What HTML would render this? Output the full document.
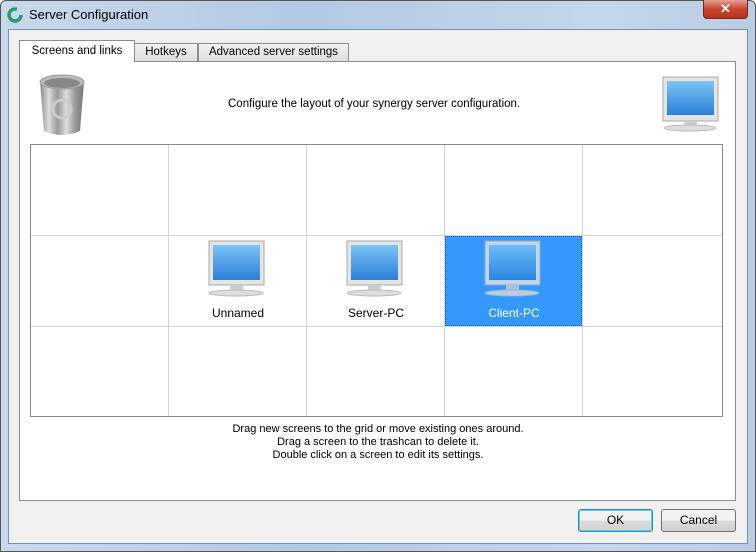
<!DOCTYPE html>
<html><head><meta charset="utf-8"><style>
*{margin:0;padding:0;box-sizing:border-box}
body{width:756px;height:552px;overflow:hidden;font-family:"Liberation Sans","Noto Sans CJK JP",sans-serif;font-size:12px;color:#000;background:#fff}
.win{position:absolute;left:0;top:0;width:756px;height:552px;background:linear-gradient(90deg,#c9d9ec,#b3c9e3 40%,#c4d6ea 80%,#b8cde5);border:1px solid #555;border-radius:6px 6px 0 0}
.title{position:absolute;left:29px;top:7px;font-size:13px;color:#000}
.client{position:absolute;left:8px;top:29px;width:740px;height:515px;background:#f0f0f0;border:1px solid #7a8fa8}
.pane{position:absolute;left:19px;top:61px;width:717px;height:440px;background:#fff;border:1px solid #898c95}
.tab{position:absolute;top:43px;height:19px;border:1px solid #898c95;background:linear-gradient(#f2f2f2,#dcdcdc);font-size:11.5px;text-align:center;line-height:17px}
.cell{position:absolute;border-right:1px solid #d4d4d4;border-bottom:1px solid #d4d4d4}
.btn{position:absolute;top:509px;height:23px;border:1px solid #707070;border-radius:3px;background:linear-gradient(#f2f2f2 50%,#dddddd 50%,#cfcfcf);text-align:center;line-height:21px}
.lbl{position:absolute;font-size:12px;text-align:center;width:138px}
</style></head><body>
<div class="win"></div>
<svg style="position:absolute;left:7px;top:7px" width="16" height="16"><circle cx="8" cy="8" r="6" fill="none" stroke="#2a9a6a" stroke-width="3.5" stroke-dasharray="30 8"/></svg>
<div class="title">Server Configuration</div>
<div style="position:absolute;left:703px;top:0;width:45px;height:19px;border:1px solid #6b2a20;border-top:none;border-radius:0 0 4px 4px;background:linear-gradient(#e8a193,#c7452f 50%,#b8321c);color:#fff;font-weight:bold;text-align:center;line-height:18px;font-size:13px">✕</div>
<div class="client"></div>
<div class="pane"></div>
<div class="tab" style="left:19px;top:40px;height:22px;width:116px;background:#fff;border-bottom:none;line-height:20px">Screens and links</div>
<div class="tab" style="left:134px;width:64px">Hotkeys</div>
<div class="tab" style="left:198px;width:151px">Advanced server settings</div>
<svg style="position:absolute;left:37px;top:73px" width="50" height="64"><defs><linearGradient id="tg" x1="0" x2="1"><stop offset="0" stop-color="#8a8a8a"/><stop offset=".2" stop-color="#ddd"/><stop offset=".4" stop-color="#999"/><stop offset=".6" stop-color="#ddd"/><stop offset=".8" stop-color="#999"/><stop offset="1" stop-color="#777"/></linearGradient></defs><path d="M3 9 L7 58 Q25 66 43 58 L47 9Z" fill="url(#tg)"/><ellipse cx="25" cy="9" rx="22" ry="7" fill="#bbb" stroke="#999"/><ellipse cx="25" cy="10" rx="18" ry="5" fill="#888"/><circle cx="25" cy="36" r="9" fill="none" stroke="#ccc" stroke-width="3"/></svg>
<div style="position:absolute;left:228px;top:98px;font-size:11.5px;width:300px;white-space:nowrap">Configure the layout of your synergy server configuration.</div>
<svg style="position:absolute;left:662px;top:76px" width="58" height="56"><defs><linearGradient id="sg" x1="0" y1="0" x2="0" y2="1"><stop offset="0" stop-color="#7cc4f6"/><stop offset="1" stop-color="#2a7fd8"/></linearGradient></defs><rect x="1" y="1" width="55" height="44" fill="#e4e4e4" stroke="#aaa"/><rect x="5" y="5" width="47" height="34" fill="url(#sg)"/><rect x="22" y="45" width="13" height="5" fill="#ccc"/><ellipse cx="28" cy="52" rx="26" ry="3" fill="#ddd" stroke="#bbb"/></svg>
<div style="position:absolute;left:30px;top:144px;width:693px;height:273px;border:1px solid #8a8a8a;background:#fff"></div>
<div id="g"></div>
<script>
var xs=[31,169,307,445,583],ys=[145,236,326],h='';
for(var r=0;r<3;r++)for(var c=0;c<5;c++){h+='<div class="cell" style="left:'+xs[c]+'px;top:'+ys[r]+'px;width:'+(c==4?139:138)+'px;height:'+(r==2?90:91)+'px;'+(c==4?'border-right:none;':'')+(r==2?'border-bottom:none;':'')+'"></div>';}
document.getElementById('g').innerHTML=h;
</script>
<div style="position:absolute;left:445px;top:236px;width:137px;height:90px;background:#3399ff;border:1px dotted #1a5fb4"></div>
<svg width="0" height="0" style="position:absolute"><defs><g id="mon"><rect x="2" y="1" width="55" height="44" fill="#e4e4e4" stroke="#aaa"/><rect x="6" y="5" width="47" height="35" fill="url(#sg)"/><rect x="23" y="45" width="13" height="6" fill="#ccc"/><ellipse cx="29" cy="53" rx="27" ry="3" fill="#ddd" stroke="#bbb"/></g></defs></svg>
<svg style="position:absolute;left:207px;top:240px" width="60" height="58"><use href="#mon"/></svg>
<svg style="position:absolute;left:345px;top:240px" width="60" height="58"><use href="#mon"/></svg>
<svg style="position:absolute;left:483px;top:240px;opacity:.8" width="60" height="58"><use href="#mon"/></svg>
<div class="lbl" style="left:169px;top:306px">Unnamed</div>
<div class="lbl" style="left:307px;top:306px">Server-PC</div>
<div class="lbl" style="left:445px;top:306px;color:#fff">Client-PC</div>
<div style="position:absolute;left:0;width:756px;top:423px;text-align:center;font-size:11px;line-height:13px">Drag new screens to the grid or move existing ones around.<br>Drag a screen to the trashcan to delete it.<br>Double click on a screen to edit its settings.</div>
<div class="btn" style="left:578px;width:75px;border-color:#3c7fb1;box-shadow:inset 0 0 0 1px #48d8fb">OK</div>
<div class="btn" style="left:661px;width:75px">Cancel</div>
</body></html>
